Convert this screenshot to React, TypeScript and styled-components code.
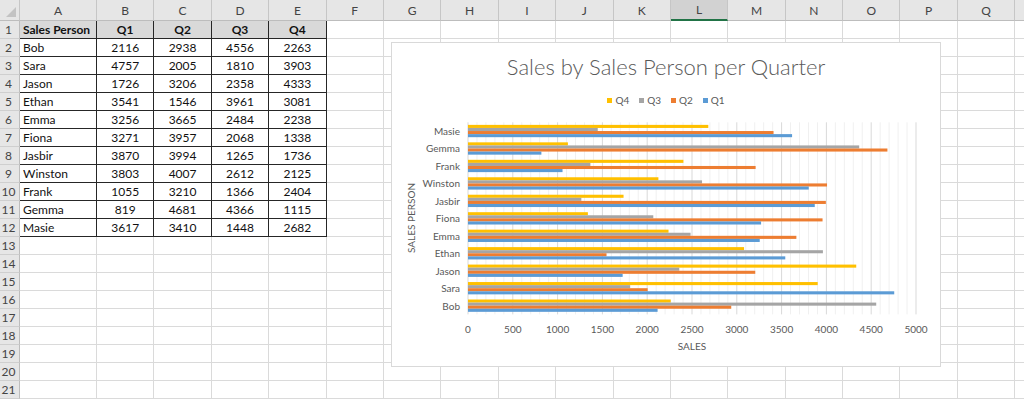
import React from 'react'
import styled, { createGlobalStyle } from 'styled-components'

const GlobalStyle = createGlobalStyle`
  html, body {
    margin: 0;
    padding: 0;
    background: #fff;
    overflow: hidden;
  }
  body {
    font-family: Lato, 'Liberation Sans', sans-serif;
  }
`

// R is only a sliver at the right edge, its letter is out of view
const COLS = 'ABCDEFGHIJKLMNOPQR'.split('')
const QUARTERS = ['Q1', 'Q2', 'Q3', 'Q4']
const SERIES_COLORS = ['#5b9bd5', '#ed7d31', '#a5a5a5', '#ffc000']
const ROW_COUNT = 21

type Row = [string, number, number, number, number]

const SALES: Row[] = [
  ['Bob', 2116, 2938, 4556, 2263],
  ['Sara', 4757, 2005, 1810, 3903],
  ['Jason', 1726, 3206, 2358, 4333],
  ['Ethan', 3541, 1546, 3961, 3081],
  ['Emma', 3256, 3665, 2484, 2238],
  ['Fiona', 3271, 3957, 2068, 1338],
  ['Jasbir', 3870, 3994, 1265, 1736],
  ['Winston', 3803, 4007, 2612, 2125],
  ['Frank', 1055, 3210, 1366, 2404],
  ['Gemma', 819, 4681, 4366, 1115],
  ['Masie', 3617, 3410, 1448, 2682],
]

// plot geometry (svg coords)
const X0 = 76
const X_SCALE = 448 / 5000
const PLOT_TOP = 15.3
const PLOT_BOTTOM = 207.4
const BAND = (PLOT_BOTTOM - PLOT_TOP) / SALES.length
const BAR_H = 3.08

const PlotArea: React.FC = () => {
  const minor: number[] = []
  for (let v = 100; v < 5000; v += 100) if (v % 500 !== 0) minor.push(v)
  const major = Array.from({ length: 11 }, (_, i) => i * 500)

  return (
    <PlotSvg width={548} height={259}>
      {minor.map(v => (
        <line
          key={'m' + v}
          x1={X0 + v * X_SCALE}
          x2={X0 + v * X_SCALE}
          y1={PLOT_TOP}
          y2={PLOT_BOTTOM}
          stroke='#f0f0f0'
          strokeWidth={1}
        />
      ))}
      {major.map(v => (
        <line
          key={'M' + v}
          x1={X0 + v * X_SCALE}
          x2={X0 + v * X_SCALE}
          y1={PLOT_TOP}
          y2={PLOT_BOTTOM}
          stroke='#d9d9d9'
          strokeWidth={1}
        />
      ))}

      {SALES.map((row, i) => {
        const bandTop = PLOT_BOTTOM - (i + 1) * BAND
        const groupTop = bandTop + (BAND - BAR_H * 4) / 2
        return (
          <g key={row[0]}>
            {[3, 2, 1, 0].map((q, k) => (
              <rect
                key={q}
                x={X0}
                y={groupTop + k * BAR_H}
                width={row[q + 1] * X_SCALE}
                height={BAR_H}
                fill={SERIES_COLORS[q]}
              />
            ))}
            <text
              x={68}
              y={bandTop + BAND / 2}
              textAnchor='end'
              dominantBaseline='central'
              fontSize={10}
              fill='#595959'
            >
              {row[0]}
            </text>
          </g>
        )
      })}

      {major.map(v => (
        <text
          key={'t' + v}
          x={X0 + v * X_SCALE}
          y={222}
          textAnchor='middle'
          dominantBaseline='central'
          fontSize={10}
          fill='#595959'
        >
          {v}
        </text>
      ))}

      <text
        x={X0 + 224}
        y={239}
        textAnchor='middle'
        dominantBaseline='central'
        fontSize={10}
        fill='#595959'
      >
        SALES
      </text>
      <text
        x={19}
        y={111}
        textAnchor='middle'
        dominantBaseline='central'
        fontSize={10}
        fill='#595959'
        transform='rotate(-90 19 111)'
      >
        SALES PERSON
      </text>
    </PlotSvg>
  )
}

const cellValue = (row: number, col: number): string | number | null => {
  if (col > 4) return null
  if (row === 1) return col === 0 ? 'Sales Person' : QUARTERS[col - 1]
  if (row >= 2 && row <= 12) return SALES[row - 2][col]
  return null
}

const App: React.FC = () => {
  return (
    <>
      <GlobalStyle />
      <Sheet>
        <Corner />
        {COLS.map(c => (
          <ColHead key={c} $selected={c === 'L'}>
            {c === 'R' ? '' : c}
          </ColHead>
        ))}
        {Array.from({ length: ROW_COUNT }, (_, i) => {
          const row = i + 1
          return (
            <React.Fragment key={row}>
              <RowHead>{row}</RowHead>
              {COLS.map((c, ci) => {
                const inTable = row <= 12 && ci <= 4
                return (
                  <Cell
                    key={c}
                    $table={inTable}
                    $head={inTable && row === 1}
                    $text={ci === 0}
                  >
                    {cellValue(row, ci)}
                  </Cell>
                )
              })}
            </React.Fragment>
          )
        })}

        <Chart>
          <ChartTitle>Sales by Sales Person per Quarter</ChartTitle>
          <Legend>
            {[3, 2, 1, 0].map(q => (
              <LegendItem key={q}>
                <Swatch $color={SERIES_COLORS[q]} />
                {QUARTERS[q]}
              </LegendItem>
            ))}
          </Legend>
          <PlotArea />
        </Chart>
      </Sheet>
    </>
  )
}

export default App

const Sheet = styled.div`
  position: relative;
  display: grid;
  grid-template-columns: 20px 77px repeat(17, 57.4px);
  grid-template-rows: 21px repeat(${ROW_COUNT}, 18px);
  align-content: start;
  width: 1024px;
  height: 401px;
  overflow: hidden;
  font-size: 12px;
`

const Corner = styled.div`
  position: relative;
  box-sizing: border-box;
  background: #e6e6e6;
  border-right: 1px solid #c6c6c6;
  border-bottom: 1px solid #bdbdbd;

  &::after {
    content: '';
    position: absolute;
    right: 3px;
    bottom: 3px;
    border-left: 10px solid transparent;
    border-bottom: 10px solid #c3c3c3;
  }
`

const ColHead = styled.div<{ $selected?: boolean }>`
  box-sizing: border-box;
  display: flex;
  align-items: center;
  justify-content: center;
  background: ${p => (p.$selected ? '#d2d2d2' : '#e6e6e6')};
  border-right: 1px solid #c6c6c6;
  border-bottom: ${p => (p.$selected ? '2px solid #217346' : '1px solid #bdbdbd')};
  color: #444;
  font-size: 12px;
`

const RowHead = styled.div`
  box-sizing: border-box;
  display: flex;
  align-items: center;
  justify-content: center;
  padding-right: 2px;
  background: #e6e6e6;
  border-right: 1px solid #bdbdbd;
  border-bottom: 1px solid #cfcfcf;
  color: #444;
  font-size: 12px;
`

const Cell = styled.div<{ $table?: boolean; $head?: boolean; $text?: boolean }>`
  box-sizing: border-box;
  padding: 0 3px;
  border-right: 1px solid ${p => (p.$table ? '#262626' : '#dadada')};
  border-bottom: 1px solid ${p => (p.$table ? '#262626' : '#dadada')};
  background: ${p => (p.$head ? '#d9d9d9' : '#fff')};
  color: #111;
  font-size: 12px;
  font-weight: ${p => (p.$head ? 700 : 400)};
  line-height: 17px;
  text-align: ${p => (p.$text ? 'left' : 'center')};
  white-space: nowrap;
  overflow: hidden;
`

const Chart = styled.div`
  position: absolute;
  left: 391px;
  top: 42px;
  width: 550px;
  height: 325px;
  box-sizing: border-box;
  display: flex;
  flex-direction: column;
  background: #fff;
  border: 1px solid #d9d9d9;
`

const ChartTitle = styled.div`
  padding-top: 9px;
  height: 30px;
  line-height: 30px;
  text-align: center;
  color: #595959;
  font-size: 22px;
  font-weight: 300;
`

const Legend = styled.div`
  margin-top: 11px;
  height: 14px;
  display: flex;
  justify-content: center;
  align-items: center;
  gap: 10px;
`

const LegendItem = styled.div`
  display: flex;
  align-items: center;
  gap: 3px;
  color: #595959;
  font-size: 10px;
`

const Swatch = styled.span<{ $color: string }>`
  width: 5px;
  height: 5px;
  background: ${p => p.$color};
`

const PlotSvg = styled.svg`
  display: block;
  font-family: Lato, 'Liberation Sans', sans-serif;
`
